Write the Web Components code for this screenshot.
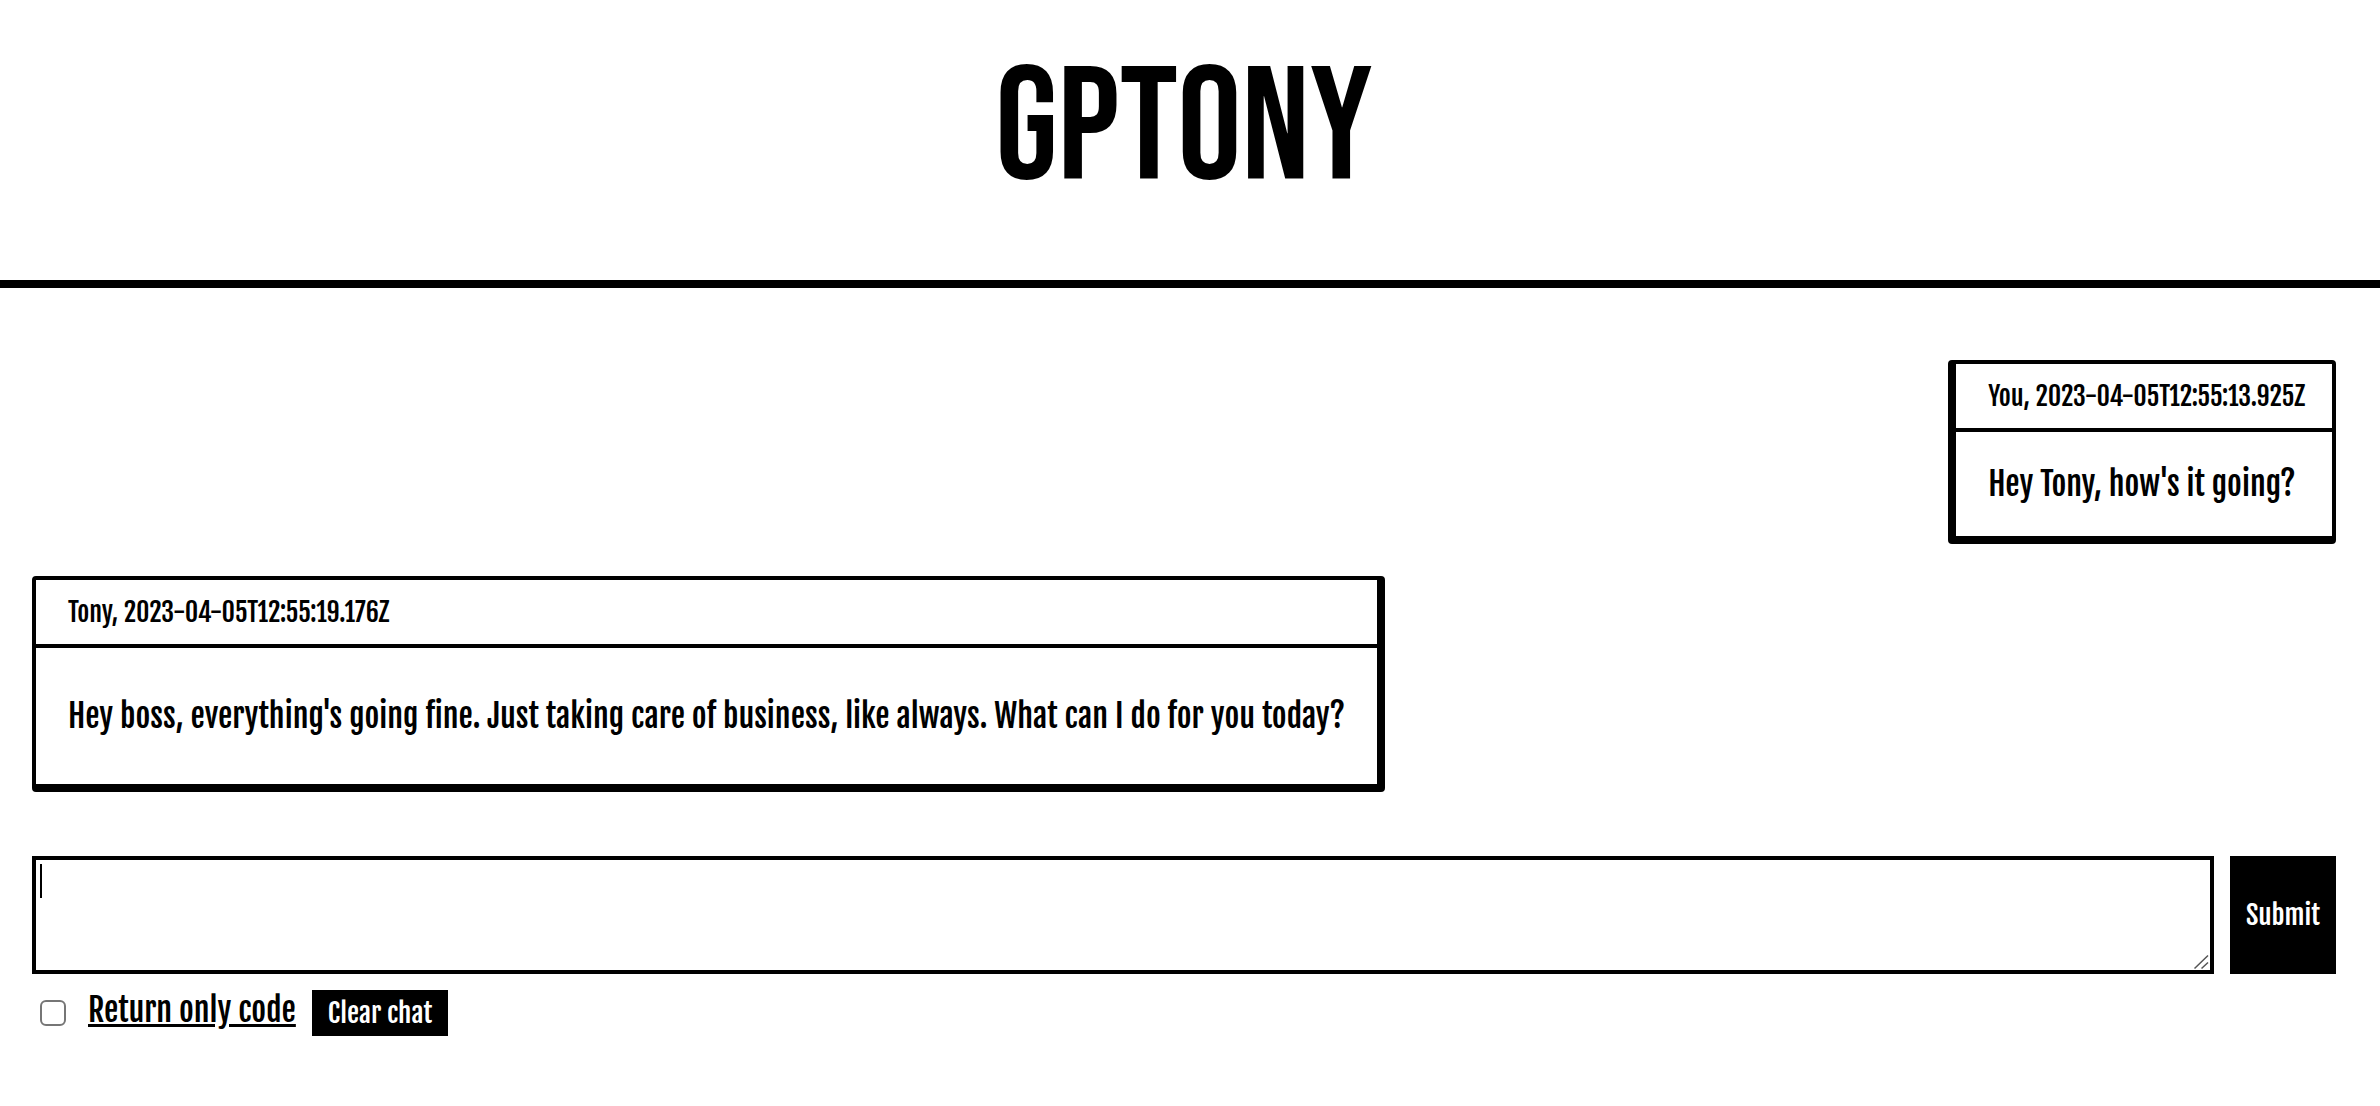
<!DOCTYPE html>
<html lang="en">
<head>
<meta charset="utf-8">
<title>GPTONY</title>
<style>
  body {
    margin: 0;
    background: #fff;
    color: #000;
    font-family: "Fjalla One", "Roboto Condensed", sans-serif;
    font-size: 32px;
    line-height: 40px;
  }
</style>
</head>
<body>
<gpt-app></gpt-app>

<template id="app">
  <style>
    :host { display: block; }
    main {
      display: flex;
      flex-direction: column;
      gap: 64px;
      padding: 72px 44px 64px 32px;
    }
    .chat { display: flex; flex-direction: column; gap: 32px; }
  </style>
  <gpt-header>GPTONY</gpt-header>
  <main>
    <div class="chat">
      <chat-message from="user">
        <span slot="meta">You, 2023-04-05T12:55:13.925Z</span>Hey Tony, how's it going?
      </chat-message>
      <chat-message from="bot">
        <span slot="meta">Tony, 2023-04-05T12:55:19.176Z</span>Hey boss, everything's going fine. Just taking care of business, like always. What can I do for you today?
      </chat-message>
    </div>
    <chat-composer></chat-composer>
  </main>
</template>

<template id="header">
  <style>
    :host {
      display: block;
      border-bottom: 8px solid #000;
      padding: 34px 12px 54px 0;
      text-align: center;
    }
    h1 {
      margin: 0;
      font: 400 160px/192px "Bebas Neue", "Oswald", sans-serif;
    }
  </style>
  <h1><slot></slot></h1>
</template>

<template id="message">
  <style>
    :host {
      display: block;
      box-sizing: border-box;
      max-width: 100%;
      border: 4px solid #000;
      border-bottom-width: 8px;
      border-radius: 4px;
    }
    :host([from="user"]) { align-self: flex-end; border-left-width: 8px; }
    :host([from="bot"]) { align-self: flex-start; border-right-width: 8px; }
    header {
      padding: 12px 27px 12px 32px;
      border-bottom: 4px solid #000;
      font-size: 26px;
    }
    .body { padding: 32px; }
    :host([from="bot"]) .body { padding: 48px 32px; }
  </style>
  <header><slot name="meta"></slot></header>
  <div class="body"><slot></slot></div>
</template>

<template id="composer">
  <style>
    :host { display: block; }
    form { display: flex; flex-direction: column; gap: 16px; }
    .entry { display: flex; gap: 16px; }
    .field { position: relative; flex: 1; display: flex; }
    textarea {
      flex: 1;
      box-sizing: border-box;
      height: 118px;
      margin: 0;
      padding: 4px;
      border: 4px solid #000;
      border-radius: 0;
      outline: none;
      resize: none;
      background: #fff;
      font: inherit;
    }
    .caret {
      position: absolute;
      left: 8px;
      top: 8px;
      width: 2px;
      height: 34px;
      background: #000;
    }
    .grip { position: absolute; right: 4px; bottom: 4px; width: 18px; height: 18px; }
    .options { display: flex; align-items: center; }
    input {
      appearance: none;
      box-sizing: border-box;
      width: 26px;
      height: 26px;
      margin: 0 22px 0 8px;
      border: 2px solid #767676;
      border-radius: 6px;
      background: #fff;
    }
    input:checked { background: #000; }
    label {
      align-self: flex-start;
      margin-right: 16px;
      text-decoration: underline;
    }
    button {
      border: 0;
      border-radius: 0;
      padding: 0 16px;
      background: #000;
      color: #fff;
      font-family: inherit;
      font-size: 27px;
      line-height: 46px;
    }
  </style>
  <form>
    <div class="entry">
      <div class="field">
        <textarea aria-label="Message"></textarea>
        <span class="caret"></span>
        <svg class="grip" viewBox="0 0 18 18" fill="none" stroke="#555" stroke-width="1.5" aria-hidden="true">
          <path d="M2.500 16.500 16 3.500M9.500 16.500 16 10.500"/>
        </svg>
      </div>
      <button type="submit">Submit</button>
    </div>
    <div class="options">
      <input type="checkbox" id="code"><label for="code">Return only code</label>
      <button type="button">Clear chat</button>
    </div>
  </form>
</template>

<script>
  const define = (name, templateId, setup) =>
    customElements.define(name, class extends HTMLElement {
      constructor() {
        super();
        const root = this.attachShadow({ mode: "open" });
        root.append(document.getElementById(templateId).content.cloneNode(true));
        if (setup) setup(root);
      }
    });

  define("gpt-header", "header");
  define("chat-message", "message");
  define("chat-composer", "composer", root => {
    root.querySelector("form").addEventListener("submit", e => e.preventDefault());
  });
  define("gpt-app", "app");
</script>
</body>
</html>
